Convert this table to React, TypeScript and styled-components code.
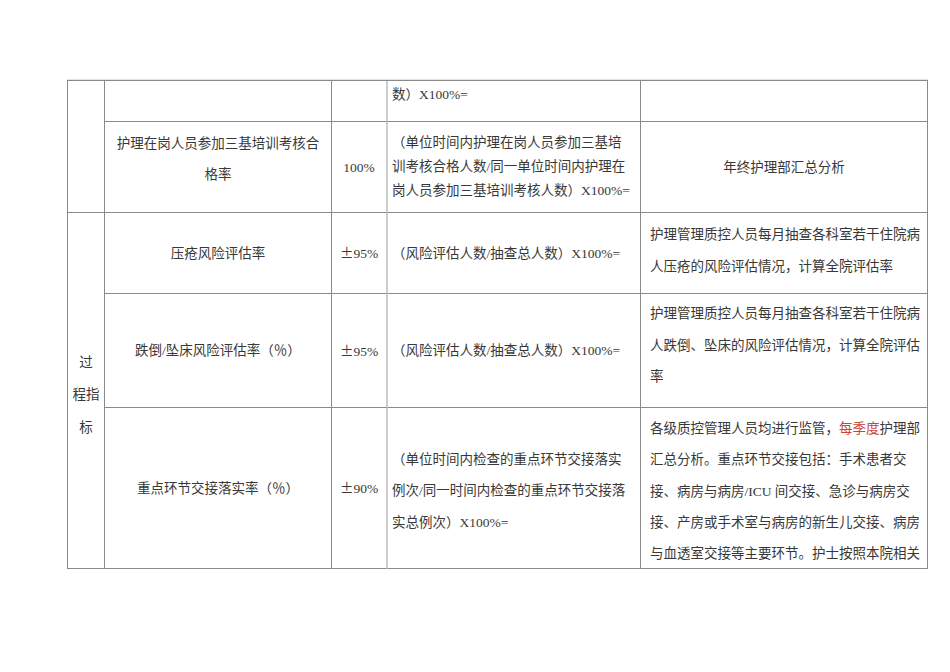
import React from 'react'
import styled, { createGlobalStyle } from 'styled-components'

const GlobalStyle = createGlobalStyle`
    html, body {
        margin: 0;
        padding: 0;
        background: #ffffff;
    }
    body {
        font-family: "Liberation Serif", "Noto Sans CJK SC", serif;
        color: #383838;
    }
`

const Page = styled.div`
    width: 950px;
    height: 672px;
    padding: 80px 0 0 67px;
    box-sizing: border-box;
    overflow: hidden;
`

const Sheet = styled.div`
    display: grid;
    grid-template-columns: 37px 227px 56px 253px 287px;
    grid-template-rows: 41px 91px 81px 114px 161px;
    width: max-content;
    border-top: 1px solid #8a8a8a;
    border-left: 1px solid #8a8a8a;
    box-shadow: 0 -1px 0 #e2e2e2;
`

type CellProps = {
    $rows?: number
    $align?: 'left' | 'center'
    $valign?: 'top' | 'middle'
    $padTop?: number
    $padLeft?: number
    $lineHeight?: number
    $soft?: boolean
}

const Cell = styled.div<CellProps>`
    ${({ $rows = 1, $align = 'center', $valign = 'middle', $padTop = 0, $padLeft = 0, $lineHeight = 31, $soft }) => `
        grid-row: span ${$rows};
        display: flex;
        flex-direction: column;
        justify-content: ${$valign === 'top' ? 'flex-start' : 'center'};
        align-items: ${$align === 'left' ? 'flex-start' : 'center'};
        text-align: ${$align};
        padding: ${$padTop}px 0 0 ${$padLeft}px;
        box-sizing: border-box;
        overflow: hidden;
        font-size: 13.5px;
        line-height: ${$lineHeight}px;
        white-space: nowrap;
        border-bottom: 1px solid #8a8a8a;
        border-right: ${$soft ? '2px solid #cdcdcd' : '1px solid #8a8a8a'};
    `}
`

const Line = styled.div`
    white-space: nowrap;
`

const Mark = styled.span`
    color: #c9453c;
`

// full-width plus-minus sign as in the source document
const Wide = styled.span`
    font-family: "Noto Sans CJK SC", sans-serif;
`

type TextCellProps = CellProps & { lines: React.ReactNode[] }

const TextCell = ({ lines, ...rest }: TextCellProps) => (
    <Cell {...rest}>
        {lines.map((l, i) => (
            <Line key={i}>{l}</Line>
        ))}
    </Cell>
)

const pm = (value: string) => (
    <>
        <Wide>±</Wide>
        {value}
    </>
)

export default function App() {
    return (
        <>
            <GlobalStyle />
            <Page>
                <Sheet>
                    {/* continued section */}
                    <Cell $rows={2} />
                    <Cell />
                    <Cell $soft />
                    <TextCell $align="left" $valign="top" $padLeft={4} $padTop={2} $lineHeight={24} lines={['数）X100%=']} />
                    <Cell />

                    <TextCell
                        $padTop={6}
                        $valign="top"
                        $lineHeight={31}
                        lines={['护理在岗人员参加三基培训考核合', '格率']}
                    />
                    <TextCell $soft lines={['100%']} />
                    <TextCell
                        $align="left"
                        $padLeft={4}
                        $lineHeight={24}
                        lines={[
                            '（单位时间内护理在岗人员参加三基培',
                            '训考核合格人数/同一单位时间内护理在',
                            '岗人员参加三基培训考核人数）X100%=',
                        ]}
                    />
                    <TextCell lines={['年终护理部汇总分析']} />

                    {/* process indicators */}
                    <TextCell $rows={3} $padTop={10} $lineHeight={32.5} lines={['过', '程指', '标']} />

                    <TextCell lines={['压疮风险评估率']} />
                    <TextCell $soft lines={[pm('95%')]} />
                    <TextCell $align="left" $padLeft={4} lines={['（风险评估人数/抽查总人数）X100%=']} />
                    <TextCell
                        $align="left"
                        $valign="top"
                        $padLeft={9}
                        $padTop={6}
                        $lineHeight={31.5}
                        lines={['护理管理质控人员每月抽查各科室若干住院病', '人压疮的风险评估情况，计算全院评估率']}
                    />

                    <TextCell lines={['跌倒/坠床风险评估率（％）']} />
                    <TextCell $soft lines={[pm('95%')]} />
                    <TextCell $align="left" $padLeft={4} lines={['（风险评估人数/抽查总人数）X100%=']} />
                    <TextCell
                        $align="left"
                        $valign="top"
                        $padLeft={9}
                        $padTop={4}
                        $lineHeight={31.5}
                        lines={[
                            '护理管理质控人员每月抽查各科室若干住院病',
                            '人跌倒、坠床的风险评估情况，计算全院评估',
                            '率',
                        ]}
                    />

                    <TextCell lines={['重点环节交接落实率（％）']} />
                    <TextCell $soft lines={[pm('90%')]} />
                    <TextCell
                        $align="left"
                        $padLeft={4}
                        $padTop={6}
                        $lineHeight={31.5}
                        lines={[
                            '（单位时间内检查的重点环节交接落实',
                            '例次/同一时间内检查的重点环节交接落',
                            '实总例次）X100%=',
                        ]}
                    />
                    <TextCell
                        $align="left"
                        $valign="top"
                        $padLeft={9}
                        $padTop={5}
                        $lineHeight={31.3}
                        lines={[
                            <>
                                各级质控管理人员均进行监管，<Mark>每季度</Mark>护理部
                            </>,
                            '汇总分析。重点环节交接包括：手术患者交',
                            '接、病房与病房/ICU 间交接、急诊与病房交',
                            '接、产房或手术室与病房的新生儿交接、病房',
                            '与血透室交接等主要环节。护士按照本院相关',
                        ]}
                    />
                </Sheet>
            </Page>
        </>
    )
}
